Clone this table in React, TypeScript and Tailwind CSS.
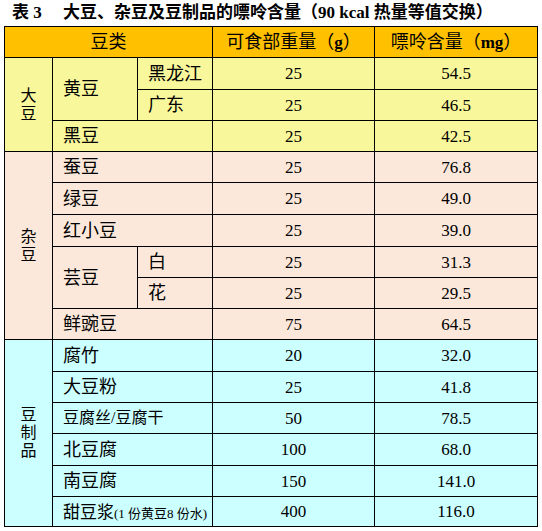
const FONT = "font-['Liberation_Serif','Noto_Sans_CJK_SC',serif]";

type Row = {
  h: string;
  bg: string;
  cells: React.ReactNode;
};

const cell = "border border-black p-0 align-middle";
const nameCell = `${cell} pl-[10px] text-left text-[18px] leading-none`;
const numCell = `${cell} text-center text-[17px] leading-none`;

function Vertical({ text }: { text: string }) {
  return (
    <div className="flex flex-col items-center text-[16px] leading-[18px]">
      {text.split("").map((c, i) => (
        <span key={i}>{c}</span>
      ))}
    </div>
  );
}

function Nums({ g, mg }: { g: string; mg: string }) {
  return (
    <>
      <td className={numCell}>{g}</td>
      <td className={numCell}>{mg}</td>
    </>
  );
}

const YELLOW = "bg-[#f8f79b]";
const PINK = "bg-[#fce8da]";
const CYAN = "bg-[#ccffff]";

export default function App() {
  const rows: Row[] = [
    {
      h: "h-[32px]",
      bg: YELLOW,
      cells: (
        <>
          <td rowSpan={3} className={`${cell} text-center`}>
            <Vertical text="大豆" />
          </td>
          <td rowSpan={2} className={nameCell}>黄豆</td>
          <td className={nameCell}>黑龙江</td>
          <Nums g="25" mg="54.5" />
        </>
      ),
    },
    {
      h: "h-[31px]",
      bg: YELLOW,
      cells: (
        <>
          <td className={nameCell}>广东</td>
          <Nums g="25" mg="46.5" />
        </>
      ),
    },
    {
      h: "h-[31px]",
      bg: YELLOW,
      cells: (
        <>
          <td colSpan={2} className={nameCell}>黑豆</td>
          <Nums g="25" mg="42.5" />
        </>
      ),
    },
    {
      h: "h-[31px]",
      bg: PINK,
      cells: (
        <>
          <td rowSpan={6} className={`${cell} text-center`}>
            <Vertical text="杂豆" />
          </td>
          <td colSpan={2} className={nameCell}>蚕豆</td>
          <Nums g="25" mg="76.8" />
        </>
      ),
    },
    {
      h: "h-[32px]",
      bg: PINK,
      cells: (
        <>
          <td colSpan={2} className={nameCell}>绿豆</td>
          <Nums g="25" mg="49.0" />
        </>
      ),
    },
    {
      h: "h-[32px]",
      bg: PINK,
      cells: (
        <>
          <td colSpan={2} className={nameCell}>红小豆</td>
          <Nums g="25" mg="39.0" />
        </>
      ),
    },
    {
      h: "h-[31px]",
      bg: PINK,
      cells: (
        <>
          <td rowSpan={2} className={nameCell}>芸豆</td>
          <td className={nameCell}>白</td>
          <Nums g="25" mg="31.3" />
        </>
      ),
    },
    {
      h: "h-[31px]",
      bg: PINK,
      cells: (
        <>
          <td className={nameCell}>花</td>
          <Nums g="25" mg="29.5" />
        </>
      ),
    },
    {
      h: "h-[31px]",
      bg: PINK,
      cells: (
        <>
          <td colSpan={2} className={nameCell}>鲜豌豆</td>
          <Nums g="75" mg="64.5" />
        </>
      ),
    },
    {
      h: "h-[32px]",
      bg: CYAN,
      cells: (
        <>
          <td rowSpan={6} className={`${cell} text-center`}>
            <Vertical text="豆制品" />
          </td>
          <td colSpan={2} className={nameCell}>腐竹</td>
          <Nums g="20" mg="32.0" />
        </>
      ),
    },
    {
      h: "h-[31px]",
      bg: CYAN,
      cells: (
        <>
          <td colSpan={2} className={nameCell}>大豆粉</td>
          <Nums g="25" mg="41.8" />
        </>
      ),
    },
    {
      h: "h-[31px]",
      bg: CYAN,
      cells: (
        <>
          <td colSpan={2} className={`${nameCell} !text-[16px]`}>豆腐丝/豆腐干</td>
          <Nums g="50" mg="78.5" />
        </>
      ),
    },
    {
      h: "h-[32px]",
      bg: CYAN,
      cells: (
        <>
          <td colSpan={2} className={nameCell}>北豆腐</td>
          <Nums g="100" mg="68.0" />
        </>
      ),
    },
    {
      h: "h-[31px]",
      bg: CYAN,
      cells: (
        <>
          <td colSpan={2} className={nameCell}>南豆腐</td>
          <Nums g="150" mg="141.0" />
        </>
      ),
    },
    {
      h: "h-[30px]",
      bg: CYAN,
      cells: (
        <>
          <td colSpan={2} className={nameCell}>
            <span className="text-[17px]">甜豆浆</span>
            <span className="text-[13px]">(1 份黄豆8 份水)</span>
          </td>
          <Nums g="400" mg="116.0" />
        </>
      ),
    },
  ];

  return (
    <div className={`${FONT} w-[542px] h-[531px] bg-white text-black`}>
      <div className="flex h-[26px] pl-[12px] pt-[4px] text-[17px] font-bold leading-[18px] whitespace-pre">
        <span className="w-[51px]">表 3</span>
        <span>大豆、杂豆及豆制品的嘌呤含量（90 kcal 热量等值交换）</span>
      </div>
      <table className="ml-[4px] w-[533px] table-fixed border-collapse border border-black">
        <colgroup>
          <col className="w-[48px]" />
          <col className="w-[85px]" />
          <col className="w-[75px]" />
          <col className="w-[162px]" />
          <col className="w-[163px]" />
        </colgroup>
        <thead>
          <tr className="h-[31px] bg-[#ffc000]">
            <th colSpan={3} className={`${cell} text-center text-[18px] font-normal leading-none`}>
              豆类
            </th>
            <th className={`${cell} text-center text-[18px] font-normal leading-none`}>
              可食部重量（<span className="font-bold text-[17px]">g</span>）
            </th>
            <th className={`${cell} text-center text-[18px] font-normal leading-none`}>
              嘌呤含量（<span className="font-bold text-[17px]">mg</span>）
            </th>
          </tr>
        </thead>
        <tbody>
          {rows.map((r, i) => (
            <tr key={i} className={`${r.h} ${r.bg}`}>
              {r.cells}
            </tr>
          ))}
        </tbody>
      </table>
    </div>
  );
}
